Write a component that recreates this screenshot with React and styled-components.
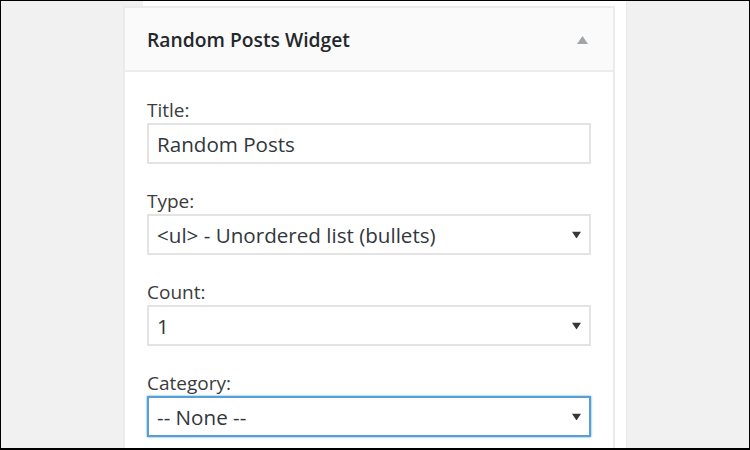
import React from "react"
import styled, { createGlobalStyle, css } from "styled-components"

const GlobalStyle = createGlobalStyle`
  html, body {
    margin: 0;
    padding: 0;
    background: #f1f1f1;
  }
  * {
    box-sizing: border-box;
  }
`

const fields = [
  { label: "Title:", kind: "text", value: "Random Posts" },
  { label: "Type:", kind: "select", value: "<ul> - Unordered list (bullets)" },
  { label: "Count:", kind: "select", value: "1" },
  { label: "Category:", kind: "select", value: "-- None --", focused: true },
]

const Caret = ({ up = false }) => (
  <svg width="11" height="8" viewBox="0 0 11 8">
    <polygon points={up ? "5.5,0 11,8 0,8" : "0,0 11,0 5.5,8"} fill="currentColor" />
  </svg>
)

const App = () => {
  return (
    <>
      <GlobalStyle />
      <Frame>
        <Gutter />
        <Sidebar>
          <Widget>
            <WidgetHeader>
              <WidgetTitle>Random Posts Widget</WidgetTitle>
              <Toggle>
                <Caret up />
              </Toggle>
            </WidgetHeader>
            <WidgetBody>
              {fields.map(({ label, kind, value, focused }) => (
                <Field key={label}>
                  <Label>{label}</Label>
                  {kind === "text" ? (
                    <TextInput defaultValue={value} />
                  ) : (
                    <SelectWrap>
                      <Select defaultValue={value} focused={focused}>
                        <option value={value}>{value}</option>
                      </Select>
                      <SelectArrow>
                        <Caret />
                      </SelectArrow>
                    </SelectWrap>
                  )}
                </Field>
              ))}
            </WidgetBody>
          </Widget>
        </Sidebar>
        <Gutter grow />
      </Frame>
    </>
  )
}

export default App

const Frame = styled.div`
  width: 750px;
  height: 450px;
  display: flex;
  background: #f1f1f1;
  border: 1px solid #000;
  border-bottom-width: 2px;
  overflow: hidden;
  font-family: "Open Sans", "DejaVu Sans", sans-serif;
`

const Gutter = styled.div`
  width: 142px;
  flex-shrink: 0;
  ${({ grow }) =>
    grow &&
    css`
      width: auto;
      flex: 1;
    `};
`

const Sidebar = styled.div`
  width: 484px;
  flex-shrink: 0;
  background: #fff;
  border-right: 1px solid #e8e8e8;
  padding-top: 5px;
  display: flex;
  flex-direction: column;
`

const Widget = styled.div`
  flex: 1;
  width: 492px;
  margin-left: -20px;
  background: #fff;
  border: 2px solid #ebebeb;
  border-bottom: none;
  display: flex;
  flex-direction: column;
`

const WidgetHeader = styled.div`
  height: 64px;
  display: flex;
  align-items: center;
  justify-content: space-between;
  padding: 0 25px 0 22px;
  background: #fafafa;
  border-bottom: 2px solid #ececec;
`

const WidgetTitle = styled.h3`
  margin: 0;
  font-size: 19.3px;
  font-weight: 600;
  color: #23282d;
`

const Toggle = styled.span`
  display: flex;
  color: #a0a5aa;
  margin-top: 2px;
`

const WidgetBody = styled.div`
  padding: 25px 22px 0;
  display: flex;
  flex-direction: column;
  gap: 24px;
`

const Field = styled.div`
  display: flex;
  flex-direction: column;
`

const Label = styled.label`
  height: 26px;
  line-height: 26px;
  font-size: 19px;
  color: #3c3c3c;
`

const fieldBox = css`
  width: 100%;
  height: 41px;
  margin: 0;
  padding: 0 8px;
  border: 2px solid #e3e3e3;
  border-radius: 0;
  background: #fff;
  font-family: "Open Sans", "DejaVu Sans", sans-serif;
  font-size: 20.6px;
  color: #32373c;
  outline: none;
`

const TextInput = styled.input`
  ${fieldBox};
`

const SelectWrap = styled.div`
  position: relative;
`

const Select = styled.select`
  ${fieldBox};
  appearance: none;
  -webkit-appearance: none;
  padding-right: 30px;
  ${({ focused }) =>
    focused &&
    css`
      border-color: #5b9dd9;
      box-shadow: 0 0 2px rgba(30, 140, 190, 0.8);
    `};
`

const SelectArrow = styled.span`
  position: absolute;
  right: 9px;
  top: 50%;
  transform: translateY(-50%) scale(0.85);
  display: flex;
  color: #32373c;
  pointer-events: none;
`
